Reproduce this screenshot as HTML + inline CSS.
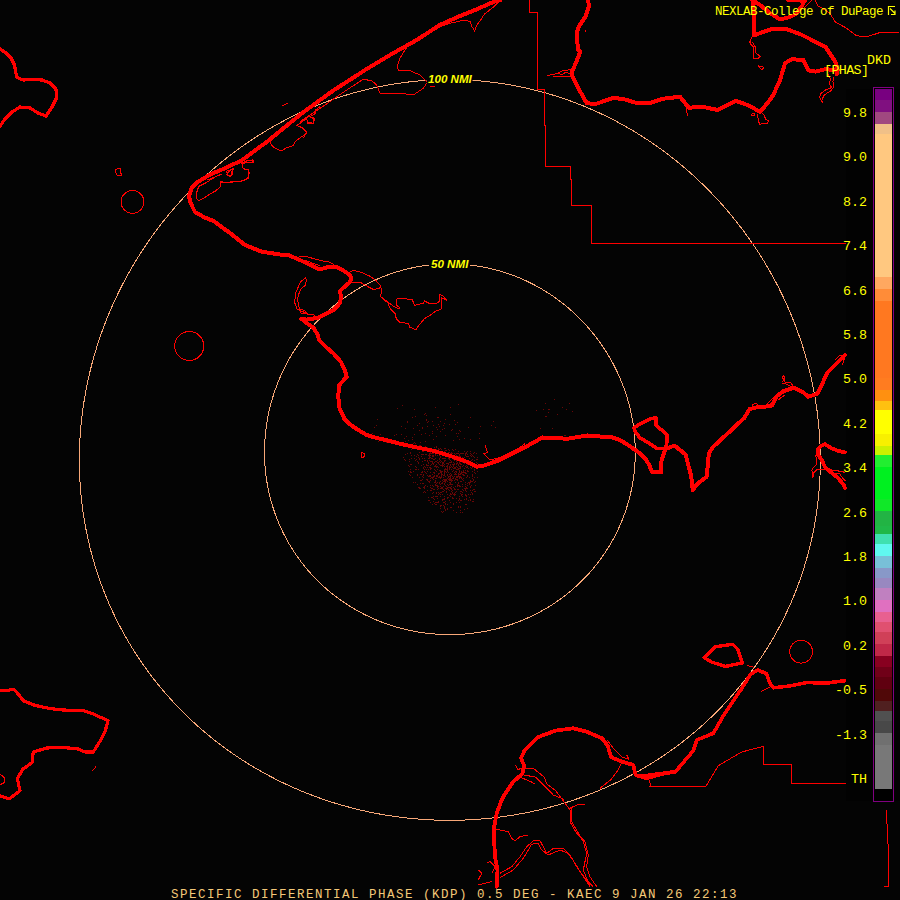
<!DOCTYPE html>
<html><head><meta charset="utf-8">
<style>
html,body{margin:0;padding:0;background:#040404;}
#wrap{position:relative;width:900px;height:900px;overflow:hidden;background:#040404;}
svg{position:absolute;left:0;top:0;}
.t{position:absolute;font-family:"Liberation Mono",monospace;white-space:pre;line-height:1;}
.lab{position:absolute;right:33px;font-family:"Liberation Mono",monospace;font-size:13.33px;line-height:1;color:#ffff00;white-space:pre;}
.nmi{position:absolute;font-family:"Liberation Sans",sans-serif;font-weight:bold;font-style:italic;font-size:11.6px;line-height:1;color:#ffff00;white-space:pre;}
</style></head><body><div id="wrap">
<svg width="900" height="900" viewBox="0 0 900 900">
<rect x="0" y="0" width="900" height="900" fill="#040404"/>
<rect x="846" y="89" width="54" height="712" fill="#020202"/>
<path d="M453 503h1v1h-1zM434 499h1v1h-1zM425 441h1v1h-1zM394 435h1v1h-1zM465 486h1v1h-1zM449 469h1v1h-1zM465 495h1v1h-1zM449 478h1v1h-1zM446 491h1v1h-1zM458 456h1v1h-1zM449 487h1v1h-1zM458 465h1v1h-1zM439 461h1v1h-1zM458 474h1v1h-1zM470 439h1v1h-1zM406 436h1v1h-1zM439 470h1v1h-1zM458 483h1v1h-1zM442 466h1v1h-1zM469 483h1v1h-1zM450 479h1v1h-1zM472 476h1v1h-1zM427 486h1v1h-1zM451 453h1v1h-1zM462 453h1v1h-1zM473 453h1v1h-1zM451 462h1v1h-1zM462 462h1v1h-1zM443 458h1v1h-1zM472 494h1v1h-1zM432 421h1v1h-1zM454 467h1v1h-1zM452 497h1v1h-1zM464 499h1v1h-1zM420 474h1v1h-1zM434 476h1v1h-1zM445 476h1v1h-1zM465 454h1v1h-1zM445 485h1v1h-1zM446 450h1v1h-1zM453 498h1v1h-1zM436 427h1v1h-1zM465 472h1v1h-1zM436 436h1v1h-1zM434 503h1v1h-1zM445 503h1v1h-1zM458 433h1v1h-1zM457 477h1v1h-1zM465 490h1v1h-1zM438 473h1v1h-1zM446 486h1v1h-1zM458 451h1v1h-1zM430 469h1v1h-1zM449 482h1v1h-1zM457 486h1v1h-1zM458 460h1v1h-1zM430 478h1v1h-1zM458 469h1v1h-1zM430 487h1v1h-1zM450 465h1v1h-1zM451 430h1v1h-1zM419 459h1v1h-1zM460 506h1v1h-1zM472 471h1v1h-1zM419 477h1v1h-1zM420 442h1v1h-1zM443 453h1v1h-1zM454 453h1v1h-1zM569 403h1v1h-1zM423 447h1v1h-1zM441 483h1v1h-1zM475 485h1v1h-1zM441 492h1v1h-1zM476 459h1v1h-1zM452 492h1v1h-1zM453 466h1v1h-1zM434 462h1v1h-1zM445 471h1v1h-1zM413 448h1v1h-1zM424 448h1v1h-1zM425 413h1v1h-1zM445 480h1v1h-1zM468 482h1v1h-1zM434 489h1v1h-1zM449 450h1v1h-1zM446 463h1v1h-1zM457 463h1v1h-1zM449 459h1v1h-1zM446 472h1v1h-1zM430 455h1v1h-1zM415 466h1v1h-1zM449 468h1v1h-1zM442 429h1v1h-1zM477 459h1v1h-1zM438 477h1v1h-1zM438 486h1v1h-1zM419 445h1v1h-1zM450 460h1v1h-1zM471 492h1v1h-1zM427 467h1v1h-1zM442 465h1v1h-1zM456 512h1v1h-1zM460 510h1v1h-1zM472 475h1v1h-1zM452 478h1v1h-1zM435 407h1v1h-1zM472 493h1v1h-1zM404 438h1v1h-1zM423 451h1v1h-1zM441 487h1v1h-1zM422 483h1v1h-1zM397 408h1v1h-1zM433 492h1v1h-1zM441 505h1v1h-1zM453 470h1v1h-1zM433 501h1v1h-1zM411 464h1v1h-1zM434 466h1v1h-1zM468 468h1v1h-1zM434 475h1v1h-1zM465 453h1v1h-1zM415 443h1v1h-1zM457 467h1v1h-1zM438 463h1v1h-1zM427 426h1v1h-1zM457 476h1v1h-1zM444 506h1v1h-1zM467 508h1v1h-1zM430 468h1v1h-1zM436 502h1v1h-1zM408 440h1v1h-1zM437 485h1v1h-1zM448 485h1v1h-1zM456 498h1v1h-1zM429 481h1v1h-1zM419 458h1v1h-1zM443 425h1v1h-1zM464 457h1v1h-1zM452 464h1v1h-1zM440 508h1v1h-1zM441 473h1v1h-1zM464 475h1v1h-1zM412 437h1v1h-1zM445 452h1v1h-1zM453 465h1v1h-1zM426 448h1v1h-1zM433 496h1v1h-1zM445 479h1v1h-1zM467 476h1v1h-1zM457 453h1v1h-1zM438 449h1v1h-1zM467 485h1v1h-1zM457 462h1v1h-1zM450 414h1v1h-1zM449 458h1v1h-1zM438 467h1v1h-1zM456 466h1v1h-1zM449 467h1v1h-1zM459 499h1v1h-1zM460 464h1v1h-1zM471 464h1v1h-1zM460 473h1v1h-1zM427 448h1v1h-1zM429 476h1v1h-1zM437 489h1v1h-1zM448 489h1v1h-1zM460 491h1v1h-1zM456 502h1v1h-1zM454 420h1v1h-1zM437 498h1v1h-1zM460 500h1v1h-1zM557 414h1v1h-1zM440 494h1v1h-1zM472 474h1v1h-1zM433 455h1v1h-1zM433 464h1v1h-1zM441 477h1v1h-1zM410 471h1v1h-1zM476 453h1v1h-1zM434 447h1v1h-1zM476 462h1v1h-1zM438 417h1v1h-1zM411 472h1v1h-1zM458 404h1v1h-1zM432 504h1v1h-1zM467 471h1v1h-1zM459 476h1v1h-1zM436 483h1v1h-1zM459 485h1v1h-1zM415 460h1v1h-1zM456 461h1v1h-1zM444 496h1v1h-1zM425 492h1v1h-1zM436 492h1v1h-1zM437 466h1v1h-1zM460 468h1v1h-1zM471 468h1v1h-1zM418 462h1v1h-1zM456 479h1v1h-1zM437 475h1v1h-1zM460 477h1v1h-1zM428 497h1v1h-1zM440 471h1v1h-1zM464 438h1v1h-1zM460 486h1v1h-1zM470 499h1v1h-1zM433 459h1v1h-1zM441 472h1v1h-1zM414 455h1v1h-1zM410 475h1v1h-1zM433 477h1v1h-1zM463 478h1v1h-1zM433 486h1v1h-1zM411 449h1v1h-1zM411 458h1v1h-1zM445 460h1v1h-1zM455 492h1v1h-1zM447 488h1v1h-1zM426 465h1v1h-1zM467 466h1v1h-1zM447 497h1v1h-1zM459 462h1v1h-1zM444 473h1v1h-1zM467 475h1v1h-1zM435 504h1v1h-1zM459 471h1v1h-1zM436 478h1v1h-1zM417 474h1v1h-1zM437 452h1v1h-1zM448 452h1v1h-1zM471 454h1v1h-1zM545 403h1v1h-1zM436 496h1v1h-1zM460 463h1v1h-1zM459 498h1v1h-1zM456 474h1v1h-1zM418 457h1v1h-1zM429 457h1v1h-1zM440 457h1v1h-1zM377 419h1v1h-1zM448 479h1v1h-1zM460 481h1v1h-1zM471 481h1v1h-1zM429 475h1v1h-1zM472 455h1v1h-1zM450 507h1v1h-1zM440 484h1v1h-1zM441 449h1v1h-1zM452 449h1v1h-1zM464 451h1v1h-1zM421 480h1v1h-1zM470 494h1v1h-1zM442 512h1v1h-1zM410 452h1v1h-1zM422 454h1v1h-1zM452 467h1v1h-1zM445 419h1v1h-1zM426 415h1v1h-1zM433 463h1v1h-1zM473 499h1v1h-1zM452 476h1v1h-1zM454 495h1v1h-1zM422 472h1v1h-1zM433 472h1v1h-1zM453 450h1v1h-1zM474 482h1v1h-1zM455 478h1v1h-1zM474 491h1v1h-1zM447 474h1v1h-1zM432 485h1v1h-1zM466 487h1v1h-1zM466 496h1v1h-1zM467 470h1v1h-1zM436 464h1v1h-1zM459 466h1v1h-1zM460 431h1v1h-1zM552 428h1v1h-1zM467 488h1v1h-1zM428 469h1v1h-1zM456 460h1v1h-1zM409 474h1v1h-1zM456 469h1v1h-1zM460 467h1v1h-1zM469 497h1v1h-1zM440 470h1v1h-1zM458 506h1v1h-1zM450 502h1v1h-1zM470 480h1v1h-1zM452 453h1v1h-1zM380 434h1v1h-1zM443 481h1v1h-1zM422 458h1v1h-1zM451 494h1v1h-1zM462 494h1v1h-1zM420 488h1v1h-1zM426 419h1v1h-1zM431 497h1v1h-1zM443 499h1v1h-1zM462 512h1v1h-1zM474 477h1v1h-1zM455 473h1v1h-1zM466 473h1v1h-1zM447 469h1v1h-1zM455 482h1v1h-1zM447 478h1v1h-1zM466 491h1v1h-1zM467 456h1v1h-1zM435 485h1v1h-1zM425 450h1v1h-1zM447 487h1v1h-1zM459 461h1v1h-1zM444 472h1v1h-1zM428 455h1v1h-1zM459 470h1v1h-1zM465 504h1v1h-1zM444 481h1v1h-1zM444 490h1v1h-1zM456 455h1v1h-1zM460 453h1v1h-1zM421 434h1v1h-1zM456 464h1v1h-1zM406 445h1v1h-1zM437 460h1v1h-1zM429 456h1v1h-1zM440 456h1v1h-1zM437 469h1v1h-1zM450 488h1v1h-1zM440 465h1v1h-1zM451 480h1v1h-1zM473 480h1v1h-1zM454 476h1v1h-1zM433 453h1v1h-1zM451 489h1v1h-1zM462 489h1v1h-1zM420 483h1v1h-1zM473 489h1v1h-1zM548 412h1v1h-1zM414 458h1v1h-1zM454 494h1v1h-1zM451 507h1v1h-1zM463 472h1v1h-1zM474 472h1v1h-1zM455 468h1v1h-1zM466 477h1v1h-1zM413 471h1v1h-1zM424 471h1v1h-1zM455 486h1v1h-1zM467 451h1v1h-1zM416 467h1v1h-1zM435 480h1v1h-1zM432 493h1v1h-1zM444 458h1v1h-1zM425 454h1v1h-1zM459 456h1v1h-1zM425 472h1v1h-1zM459 474h1v1h-1zM449 500h1v1h-1zM437 455h1v1h-1zM448 455h1v1h-1zM429 451h1v1h-1zM439 483h1v1h-1zM450 483h1v1h-1zM429 460h1v1h-1zM440 460h1v1h-1zM470 461h1v1h-1zM421 456h1v1h-1zM462 457h1v1h-1zM427 490h1v1h-1zM442 488h1v1h-1zM421 465h1v1h-1zM451 466h1v1h-1zM462 466h1v1h-1zM443 462h1v1h-1zM451 475h1v1h-1zM433 439h1v1h-1zM451 484h1v1h-1zM462 484h1v1h-1zM454 480h1v1h-1zM423 474h1v1h-1zM443 489h1v1h-1zM432 452h1v1h-1zM455 454h1v1h-1zM423 483h1v1h-1zM454 489h1v1h-1zM432 461h1v1h-1zM423 492h1v1h-1zM424 466h1v1h-1zM435 466h1v1h-1zM447 468h1v1h-1zM468 500h1v1h-1zM432 488h1v1h-1zM435 484h1v1h-1zM436 449h1v1h-1zM465 494h1v1h-1zM417 454h1v1h-1zM479 438h1v1h-1zM425 467h1v1h-1zM436 467h1v1h-1zM428 463h1v1h-1zM458 464h1v1h-1zM409 459h1v1h-1zM477 477h1v1h-1zM449 495h1v1h-1zM458 473h1v1h-1zM458 482h1v1h-1zM469 482h1v1h-1zM450 478h1v1h-1zM461 478h1v1h-1zM429 455h1v1h-1zM442 474h1v1h-1zM450 487h1v1h-1zM451 452h1v1h-1zM458 500h1v1h-1zM442 483h1v1h-1zM452 429h1v1h-1zM450 496h1v1h-1zM451 461h1v1h-1zM433 425h1v1h-1zM536 410h1v1h-1zM431 464h1v1h-1zM424 458h1v1h-1zM451 479h1v1h-1zM462 479h1v1h-1zM473 479h1v1h-1zM443 475h1v1h-1zM451 488h1v1h-1zM463 453h1v1h-1zM372 433h1v1h-1zM455 449h1v1h-1zM463 462h1v1h-1zM413 443h1v1h-1zM454 493h1v1h-1zM432 456h1v1h-1zM423 487h1v1h-1zM447 454h1v1h-1zM455 467h1v1h-1zM416 448h1v1h-1zM466 467h1v1h-1zM435 461h1v1h-1zM447 463h1v1h-1zM432 474h1v1h-1zM435 470h1v1h-1zM543 409h1v1h-1zM444 448h1v1h-1zM465 489h1v1h-1zM457 485h1v1h-1zM409 445h1v1h-1zM477 463h1v1h-1zM428 458h1v1h-1zM458 459h1v1h-1zM449 490h1v1h-1zM439 455h1v1h-1zM458 468h1v1h-1zM461 464h1v1h-1zM439 464h1v1h-1zM450 464h1v1h-1zM469 477h1v1h-1zM427 471h1v1h-1zM439 473h1v1h-1zM450 473h1v1h-1zM470 451h1v1h-1zM461 473h1v1h-1zM427 480h1v1h-1zM439 482h1v1h-1zM450 482h1v1h-1zM402 405h1v1h-1zM461 491h1v1h-1zM451 456h1v1h-1zM473 456h1v1h-1zM442 487h1v1h-1zM443 452h1v1h-1zM461 500h1v1h-1zM473 465h1v1h-1zM451 474h1v1h-1zM462 474h1v1h-1zM431 468h1v1h-1zM432 433h1v1h-1zM423 464h1v1h-1zM431 477h1v1h-1zM443 479h1v1h-1zM474 457h1v1h-1zM466 453h1v1h-1zM445 488h1v1h-1zM435 465h1v1h-1zM465 466h1v1h-1zM453 510h1v1h-1zM425 448h1v1h-1zM465 484h1v1h-1zM446 480h1v1h-1zM457 480h1v1h-1zM449 476h1v1h-1zM446 489h1v1h-1zM430 472h1v1h-1zM457 489h1v1h-1zM477 467h1v1h-1zM493 421h1v1h-1zM438 494h1v1h-1zM439 459h1v1h-1zM430 490h1v1h-1zM442 464h1v1h-1zM427 475h1v1h-1zM439 477h1v1h-1zM450 477h1v1h-1zM470 455h1v1h-1zM408 471h1v1h-1zM461 477h1v1h-1zM442 482h1v1h-1zM420 445h1v1h-1zM462 460h1v1h-1zM442 491h1v1h-1zM454 456h1v1h-1zM464 488h1v1h-1zM443 465h1v1h-1zM472 501h1v1h-1zM349 421h1v1h-1zM454 474h1v1h-1zM423 468h1v1h-1zM412 477h1v1h-1zM423 477h1v1h-1zM453 478h1v1h-1zM432 455h1v1h-1zM453 487h1v1h-1zM424 460h1v1h-1zM465 461h1v1h-1zM426 479h1v1h-1zM416 456h1v1h-1zM468 494h1v1h-1zM428 421h1v1h-1zM465 470h1v1h-1zM554 399h1v1h-1zM445 501h1v1h-1zM446 466h1v1h-1zM438 462h1v1h-1zM449 462h1v1h-1zM445 510h1v1h-1zM465 488h1v1h-1zM415 469h1v1h-1zM437 417h1v1h-1zM457 484h1v1h-1zM430 467h1v1h-1zM565 435h1v1h-1zM409 444h1v1h-1zM449 480h1v1h-1zM386 442h1v1h-1zM469 458h1v1h-1zM430 476h1v1h-1zM477 471h1v1h-1zM439 454h1v1h-1zM566 409h1v1h-1zM430 485h1v1h-1zM427 461h1v1h-1zM458 476h1v1h-1zM461 472h1v1h-1zM437 502h1v1h-1zM427 479h1v1h-1zM461 481h1v1h-1zM472 478h1v1h-1zM431 449h1v1h-1zM412 445h1v1h-1zM431 458h1v1h-1zM454 460h1v1h-1zM423 454h1v1h-1zM452 490h1v1h-1zM453 464h1v1h-1zM413 428h1v1h-1zM404 459h1v1h-1zM468 462h1v1h-1zM434 469h1v1h-1zM445 469h1v1h-1zM468 471h1v1h-1zM374 427h1v1h-1zM435 455h1v1h-1zM562 407h1v1h-1zM438 448h1v1h-1zM564 435h1v1h-1zM417 425h1v1h-1zM430 453h1v1h-1zM449 466h1v1h-1zM446 479h1v1h-1zM457 479h1v1h-1zM477 457h1v1h-1zM446 488h1v1h-1zM458 453h1v1h-1zM415 482h1v1h-1zM427 447h1v1h-1zM439 449h1v1h-1zM430 480h1v1h-1zM449 484h1v1h-1zM439 458h1v1h-1zM419 452h1v1h-1zM442 454h1v1h-1zM427 465h1v1h-1zM450 467h1v1h-1zM442 463h1v1h-1zM472 464h1v1h-1zM448 497h1v1h-1zM549 409h1v1h-1zM441 476h1v1h-1zM431 453h1v1h-1zM424 414h1v1h-1zM453 459h1v1h-1zM423 467h1v1h-1zM453 468h1v1h-1zM405 428h1v1h-1zM453 477h1v1h-1zM434 473h1v1h-1zM426 469h1v1h-1zM434 482h1v1h-1zM445 482h1v1h-1zM449 452h1v1h-1zM430 448h1v1h-1zM439 426h1v1h-1zM430 457h1v1h-1zM459 502h1v1h-1zM449 479h1v1h-1zM545 416h1v1h-1zM430 475h1v1h-1zM460 476h1v1h-1zM450 453h1v1h-1zM461 453h1v1h-1zM408 447h1v1h-1zM471 485h1v1h-1zM427 460h1v1h-1zM442 458h1v1h-1zM472 459h1v1h-1zM440 488h1v1h-1zM412 417h1v1h-1zM408 465h1v1h-1zM401 426h1v1h-1zM460 512h1v1h-1zM440 506h1v1h-1zM441 471h1v1h-1zM452 471h1v1h-1zM475 473h1v1h-1zM452 480h1v1h-1zM422 476h1v1h-1zM433 476h1v1h-1zM475 491h1v1h-1zM432 431h1v1h-1zM445 450h1v1h-1zM452 498h1v1h-1zM434 459h1v1h-1zM480 426h1v1h-1zM572 411h1v1h-1zM445 468h1v1h-1zM426 464h1v1h-1zM465 455h1v1h-1zM426 473h1v1h-1zM467 483h1v1h-1zM457 469h1v1h-1zM430 452h1v1h-1zM444 499h1v1h-1zM430 461h1v1h-1zM449 474h1v1h-1zM444 508h1v1h-1zM436 504h1v1h-1zM470 417h1v1h-1zM428 500h1v1h-1zM456 491h1v1h-1zM437 487h1v1h-1zM448 487h1v1h-1zM437 496h1v1h-1zM440 492h1v1h-1zM452 457h1v1h-1zM464 468h1v1h-1zM472 481h1v1h-1zM441 475h1v1h-1zM412 439h1v1h-1zM453 440h1v1h-1zM410 469h1v1h-1zM422 471h1v1h-1zM423 448h1v1h-1zM452 484h1v1h-1zM404 444h1v1h-1zM452 493h1v1h-1zM453 458h1v1h-1zM433 489h1v1h-1zM468 456h1v1h-1zM463 490h1v1h-1zM433 498h1v1h-1zM403 457h1v1h-1zM466 495h1v1h-1zM434 472h1v1h-1zM438 424h1v1h-1zM449 424h1v1h-1zM466 504h1v1h-1zM445 481h1v1h-1zM450 407h1v1h-1zM447 509h1v1h-1zM438 451h1v1h-1zM430 465h1v1h-1zM448 464h1v1h-1zM460 466h1v1h-1zM456 477h1v1h-1zM418 469h1v1h-1zM437 482h1v1h-1zM440 478h1v1h-1zM460 493h1v1h-1zM421 474h1v1h-1zM418 487h1v1h-1zM472 467h1v1h-1zM546 416h1v1h-1zM440 496h1v1h-1zM441 461h1v1h-1zM464 463h1v1h-1zM440 505h1v1h-1zM464 472h1v1h-1zM401 434h1v1h-1zM410 464h1v1h-1zM475 481h1v1h-1zM441 488h1v1h-1zM434 449h1v1h-1zM453 462h1v1h-1zM445 458h1v1h-1zM426 454h1v1h-1zM432 497h1v1h-1zM467 464h1v1h-1zM466 499h1v1h-1zM407 422h1v1h-1zM444 471h1v1h-1zM435 502h1v1h-1zM447 504h1v1h-1zM444 480h1v1h-1zM436 476h1v1h-1zM459 478h1v1h-1zM425 485h1v1h-1zM436 485h1v1h-1zM444 498h1v1h-1zM456 463h1v1h-1zM428 481h1v1h-1zM459 496h1v1h-1zM419 423h1v1h-1zM444 507h1v1h-1zM456 472h1v1h-1zM418 455h1v1h-1zM448 477h1v1h-1zM437 486h1v1h-1zM429 482h1v1h-1zM495 427h1v1h-1zM452 456h1v1h-1zM433 452h1v1h-1zM429 500h1v1h-1zM441 465h1v1h-1zM422 461h1v1h-1zM441 474h1v1h-1zM463 471h1v1h-1zM445 435h1v1h-1zM443 502h1v1h-1zM422 479h1v1h-1zM433 479h1v1h-1zM463 480h1v1h-1zM443 511h1v1h-1zM474 489h1v1h-1zM447 481h1v1h-1zM455 494h1v1h-1zM424 488h1v1h-1zM459 455h1v1h-1zM457 436h1v1h-1zM444 466h1v1h-1zM479 433h1v1h-1zM444 475h1v1h-1zM447 508h1v1h-1zM436 471h1v1h-1zM444 484h1v1h-1zM453 494h1v1h-1zM428 476h1v1h-1zM427 422h1v1h-1zM407 453h1v1h-1zM460 456h1v1h-1zM471 456h1v1h-1zM444 502h1v1h-1zM491 425h1v1h-1zM448 463h1v1h-1zM456 476h1v1h-1zM448 472h1v1h-1zM460 474h1v1h-1zM440 477h1v1h-1zM377 439h1v1h-1zM440 486h1v1h-1zM441 451h1v1h-1zM470 487h1v1h-1zM414 434h1v1h-1zM433 456h1v1h-1zM462 492h1v1h-1zM454 488h1v1h-1zM473 501h1v1h-1zM410 472h1v1h-1zM463 475h1v1h-1zM455 471h1v1h-1zM445 448h1v1h-1zM447 467h1v1h-1zM432 478h1v1h-1zM376 425h1v1h-1zM411 455h1v1h-1zM457 422h1v1h-1zM455 489h1v1h-1zM467 454h1v1h-1zM415 416h1v1h-1zM466 498h1v1h-1zM444 461h1v1h-1zM447 494h1v1h-1zM407 421h1v1h-1zM444 470h1v1h-1zM436 466h1v1h-1zM459 468h1v1h-1zM444 479h1v1h-1zM428 462h1v1h-1zM436 475h1v1h-1zM459 477h1v1h-1zM456 453h1v1h-1zM459 486h1v1h-1zM448 449h1v1h-1zM436 493h1v1h-1zM448 458h1v1h-1zM471 460h1v1h-1zM456 471h1v1h-1zM429 454h1v1h-1zM418 463h1v1h-1zM437 476h1v1h-1zM448 476h1v1h-1zM461 495h1v1h-1zM440 472h1v1h-1zM451 469h1v1h-1zM440 481h1v1h-1zM470 482h1v1h-1zM442 500h1v1h-1zM452 455h1v1h-1zM422 451h1v1h-1zM474 452h1v1h-1zM470 500h1v1h-1zM462 496h1v1h-1zM468 427h1v1h-1zM431 490h1v1h-1zM455 457h1v1h-1zM463 470h1v1h-1zM474 470h1v1h-1zM424 469h1v1h-1zM447 471h1v1h-1zM403 446h1v1h-1zM435 478h1v1h-1zM424 487h1v1h-1zM436 452h1v1h-1zM459 454h1v1h-1zM467 467h1v1h-1zM435 496h1v1h-1zM436 461h1v1h-1zM459 463h1v1h-1zM444 474h1v1h-1zM447 498h1v1h-1zM459 472h1v1h-1zM396 434h1v1h-1zM444 483h1v1h-1zM440 431h1v1h-1zM417 475h1v1h-1zM419 430h1v1h-1zM417 484h1v1h-1zM429 449h1v1h-1zM458 485h1v1h-1zM437 462h1v1h-1zM429 458h1v1h-1zM421 454h1v1h-1zM429 467h1v1h-1zM422 428h1v1h-1zM421 472h1v1h-1zM470 486h1v1h-1zM414 442h1v1h-1zM410 453h1v1h-1zM451 491h1v1h-1zM466 452h1v1h-1zM463 465h1v1h-1zM463 474h1v1h-1zM443 505h1v1h-1zM447 466h1v1h-1zM432 477h1v1h-1zM405 460h1v1h-1zM455 479h1v1h-1zM447 475h1v1h-1zM540 428h1v1h-1zM466 488h1v1h-1zM444 451h1v1h-1zM416 469h1v1h-1zM413 482h1v1h-1zM436 447h1v1h-1zM435 482h1v1h-1zM444 460h1v1h-1zM447 484h1v1h-1zM424 491h1v1h-1zM459 458h1v1h-1zM444 469h1v1h-1zM417 461h1v1h-1zM429 435h1v1h-1zM409 466h1v1h-1zM438 502h1v1h-1zM448 457h1v1h-1zM439 476h1v1h-1zM450 476h1v1h-1zM429 453h1v1h-1zM458 489h1v1h-1zM440 462h1v1h-1zM450 494h1v1h-1zM461 494h1v1h-1zM458 507h1v1h-1zM419 488h1v1h-1zM470 481h1v1h-1zM454 464h1v1h-1zM442 499h1v1h-1zM470 490h1v1h-1zM451 486h1v1h-1zM462 486h1v1h-1zM420 480h1v1h-1zM463 460h1v1h-1zM474 460h1v1h-1zM443 491h1v1h-1zM455 456h1v1h-1zM466 456h1v1h-1zM474 469h1v1h-1zM426 420h1v1h-1zM548 409h1v1h-1zM432 463h1v1h-1zM466 465h1v1h-1zM444 428h1v1h-1zM455 474h1v1h-1zM447 470h1v1h-1zM453 504h1v1h-1zM425 433h1v1h-1zM445 509h1v1h-1zM364 435h1v1h-1zM424 486h1v1h-1zM444 464h1v1h-1zM425 460h1v1h-1zM446 492h1v1h-1zM440 421h1v1h-1zM438 488h1v1h-1zM428 465h1v1h-1zM409 461h1v1h-1zM450 462h1v1h-1zM458 475h1v1h-1zM461 471h1v1h-1zM440 448h1v1h-1zM469 484h1v1h-1zM430 502h1v1h-1zM450 480h1v1h-1zM470 467h1v1h-1zM422 427h1v1h-1zM442 494h1v1h-1zM455 424h1v1h-1zM462 472h1v1h-1zM454 468h1v1h-1zM451 481h1v1h-1zM443 477h1v1h-1zM464 509h1v1h-1zM443 486h1v1h-1zM432 449h1v1h-1zM432 458h1v1h-1zM405 441h1v1h-1zM444 423h1v1h-1zM435 454h1v1h-1zM447 456h1v1h-1zM447 465h1v1h-1zM459 430h1v1h-1zM416 459h1v1h-1zM465 473h1v1h-1zM459 439h1v1h-1zM445 504h1v1h-1zM446 469h1v1h-1zM435 481h1v1h-1zM425 446h1v1h-1zM436 446h1v1h-1zM465 482h1v1h-1zM438 474h1v1h-1zM456 433h1v1h-1zM437 429h1v1h-1zM378 441h1v1h-1zM438 492h1v1h-1zM438 501h1v1h-1zM442 462h1v1h-1zM450 475h1v1h-1zM470 453h1v1h-1zM442 471h1v1h-1zM450 484h1v1h-1zM460 507h1v1h-1zM442 480h1v1h-1zM414 409h1v1h-1zM439 493h1v1h-1zM450 493h1v1h-1zM390 442h1v1h-1zM419 487h1v1h-1zM472 490h1v1h-1zM431 461h1v1h-1zM443 463h1v1h-1zM454 463h1v1h-1zM454 472h1v1h-1zM423 475h1v1h-1zM441 511h1v1h-1zM431 488h1v1h-1zM432 453h1v1h-1zM435 449h1v1h-1zM432 462h1v1h-1zM435 458h1v1h-1zM405 454h1v1h-1z" fill="#6a0606"/>
<polygon points="820.21,450.00 820.28,453.24 820.33,456.47 820.35,459.71 820.34,462.95 820.30,466.19 820.23,469.43 820.13,472.67 820.00,475.91 819.85,479.15 819.67,482.39 819.45,485.62 819.21,488.86 818.94,492.09 818.64,495.33 818.32,498.56 817.96,501.78 817.57,505.01 817.16,508.23 816.71,511.45 816.24,514.67 815.74,517.88 815.20,521.09 814.64,524.29 814.05,527.49 813.43,530.68 812.79,533.87 812.11,537.05 811.40,540.23 810.67,543.40 809.90,546.57 809.11,549.73 808.28,552.88 807.43,556.02 806.55,559.16 805.64,562.29 804.70,565.41 803.74,568.53 802.74,571.63 801.72,574.73 800.66,577.81 799.58,580.89 798.47,583.96 797.33,587.01 796.16,590.06 794.97,593.10 793.74,596.12 792.49,599.14 791.21,602.14 789.90,605.13 788.57,608.11 787.21,611.08 785.82,614.03 784.40,616.97 782.95,619.90 781.48,622.82 779.98,625.72 778.45,628.61 776.90,631.48 775.32,634.34 773.71,637.18 772.08,640.01 770.42,642.83 768.73,645.62 767.02,648.41 765.28,651.17 763.52,653.93 761.73,656.66 759.91,659.38 758.07,662.08 756.21,664.76 754.32,667.43 752.41,670.08 750.47,672.71 748.51,675.32 746.52,677.91 744.51,680.49 742.48,683.04 740.42,685.58 738.34,688.10 736.23,690.60 734.11,693.08 731.96,695.54 729.79,697.98 727.59,700.40 725.38,702.80 723.14,705.17 720.88,707.53 718.60,709.87 716.30,712.18 713.98,714.48 711.63,716.75 709.27,719.00 706.89,721.23 704.48,723.44 702.06,725.62 699.62,727.78 697.15,729.92 694.67,732.04 692.17,734.13 689.66,736.21 687.12,738.25 684.56,740.28 681.99,742.28 679.40,744.26 676.79,746.22 674.17,748.15 671.53,750.05 668.87,751.94 666.20,753.80 663.51,755.63 660.80,757.44 658.08,759.23 655.34,760.99 652.59,762.73 649.82,764.44 647.04,766.13 644.24,767.79 641.43,769.43 638.61,771.05 635.77,772.63 632.92,774.20 630.06,775.73 627.18,777.25 624.29,778.73 621.39,780.20 618.48,781.63 615.55,783.04 612.61,784.43 609.66,785.79 606.70,787.12 603.73,788.43 600.75,789.71 597.76,790.97 594.75,792.20 591.74,793.40 588.72,794.58 585.69,795.73 582.65,796.86 579.60,797.96 576.54,799.03 573.47,800.08 570.39,801.10 567.31,802.10 564.22,803.06 561.12,804.01 558.01,804.92 554.90,805.81 551.78,806.68 548.65,807.51 545.51,808.33 542.37,809.11 539.22,809.87 536.07,810.60 532.91,811.30 529.75,811.98 526.58,812.63 523.41,813.26 520.23,813.86 517.04,814.43 513.86,814.98 510.66,815.50 507.47,815.99 504.27,816.46 501.06,816.90 497.86,817.31 494.65,817.69 491.43,818.05 488.22,818.39 485.00,818.69 481.78,818.97 478.56,819.23 475.33,819.45 472.11,819.65 468.88,819.83 465.65,819.98 462.42,820.10 459.19,820.19 455.96,820.26 452.73,820.30 449.50,820.31 446.27,820.30 443.04,820.26 439.81,820.19 436.58,820.10 433.35,819.98 430.12,819.83 426.89,819.66 423.66,819.46 420.44,819.23 417.22,818.98 414.00,818.70 410.78,818.40 407.56,818.06 404.35,817.70 401.14,817.32 397.94,816.90 394.73,816.46 391.53,816.00 388.34,815.51 385.14,814.99 381.95,814.44 378.77,813.87 375.59,813.27 372.42,812.64 369.25,811.99 366.08,811.31 362.93,810.61 359.77,809.88 356.63,809.12 353.49,808.33 350.35,807.52 347.22,806.68 344.10,805.82 340.99,804.93 337.88,804.01 334.78,803.07 331.69,802.10 328.61,801.10 325.53,800.08 322.46,799.03 319.41,797.95 316.36,796.85 313.32,795.72 310.29,794.57 307.26,793.39 304.25,792.18 301.25,790.95 298.26,789.69 295.28,788.41 292.31,787.10 289.35,785.76 286.40,784.40 283.47,783.01 280.54,781.60 277.63,780.16 274.73,778.69 271.84,777.20 268.97,775.69 266.11,774.15 263.26,772.58 260.42,770.99 257.60,769.37 254.79,767.73 252.00,766.07 249.22,764.37 246.46,762.66 243.71,760.92 240.98,759.15 238.26,757.36 235.55,755.55 232.87,753.71 230.20,751.84 227.54,749.96 224.91,748.05 222.29,746.11 219.68,744.15 217.10,742.17 214.53,740.16 211.98,738.14 209.45,736.08 206.93,734.01 204.44,731.91 201.96,729.79 199.51,727.64 197.07,725.48 194.65,723.29 192.25,721.08 189.88,718.85 187.52,716.59 185.18,714.32 182.87,712.02 180.57,709.70 178.30,707.36 176.05,705.00 173.81,702.62 171.61,700.22 169.42,697.79 167.25,695.35 165.11,692.89 162.99,690.41 160.90,687.91 158.82,685.38 156.77,682.84 154.75,680.29 152.75,677.71 150.77,675.11 148.81,672.50 146.88,669.86 144.98,667.21 143.10,664.55 141.24,661.86 139.41,659.16 137.60,656.44 135.82,653.70 134.07,650.95 132.34,648.18 130.63,645.40 128.96,642.60 127.31,639.79 125.68,636.96 124.08,634.11 122.51,631.25 120.96,628.38 119.45,625.49 117.95,622.59 116.49,619.68 115.05,616.75 113.64,613.81 112.26,610.86 110.90,607.89 109.58,604.91 108.28,601.92 107.01,598.92 105.76,595.91 104.55,592.88 103.36,589.85 102.20,586.81 101.07,583.75 99.97,580.69 98.89,577.61 97.84,574.53 96.83,571.43 95.84,568.33 94.88,565.22 93.95,562.11 93.04,558.98 92.17,555.85 91.32,552.71 90.51,549.56 89.72,546.40 88.96,543.24 88.23,540.07 87.53,536.90 86.86,533.72 86.22,530.54 85.60,527.35 85.02,524.15 84.46,520.96 83.93,517.75 83.44,514.55 82.97,511.34 82.53,508.12 82.11,504.91 81.73,501.69 81.38,498.46 81.05,495.24 80.76,492.01 80.49,488.78 80.25,485.55 80.04,482.32 79.86,479.09 79.71,475.86 79.58,472.63 79.49,469.39 79.42,466.16 79.38,462.92 79.37,459.69 79.39,456.46 79.44,453.23 79.51,450.00 79.61,446.77 79.74,443.55 79.90,440.32 80.09,437.10 80.30,433.88 80.54,430.66 80.81,427.45 81.11,424.24 81.43,421.03 81.79,417.83 82.16,414.63 82.57,411.43 83.00,408.24 83.47,405.06 83.95,401.87 84.47,398.70 85.01,395.53 85.58,392.36 86.17,389.20 86.79,386.04 87.44,382.90 88.11,379.75 88.81,376.62 89.54,373.49 90.29,370.37 91.07,367.25 91.87,364.14 92.70,361.04 93.56,357.95 94.44,354.86 95.35,351.78 96.28,348.72 97.24,345.65 98.22,342.60 99.22,339.56 100.26,336.52 101.31,333.50 102.39,330.48 103.50,327.48 104.63,324.48 105.79,321.49 106.97,318.51 108.17,315.55 109.40,312.59 110.65,309.64 111.93,306.71 113.23,303.78 114.55,300.87 115.90,297.97 117.27,295.08 118.66,292.20 120.08,289.33 121.52,286.47 122.98,283.63 124.47,280.80 125.98,277.98 127.51,275.17 129.07,272.38 130.64,269.60 132.24,266.83 133.87,264.08 135.51,261.34 137.18,258.61 138.87,255.90 140.58,253.20 142.31,250.51 144.07,247.84 145.85,245.18 147.64,242.54 149.46,239.91 151.31,237.30 153.17,234.70 155.05,232.12 156.96,229.55 158.88,227.00 160.83,224.47 162.80,221.95 164.79,219.44 166.80,216.96 168.83,214.49 170.88,212.03 172.95,209.60 175.04,207.17 177.15,204.77 179.28,202.39 181.43,200.02 183.60,197.67 185.79,195.33 187.99,193.02 190.22,190.72 192.47,188.44 194.74,186.19 197.02,183.94 199.33,181.72 201.65,179.52 203.99,177.34 206.35,175.17 208.73,173.03 211.13,170.90 213.54,168.80 215.98,166.71 218.43,164.65 220.89,162.60 223.38,160.58 225.88,158.58 228.41,156.60 230.94,154.64 233.50,152.70 236.07,150.78 238.66,148.89 241.26,147.01 243.88,145.16 246.52,143.33 249.17,141.53 251.84,139.74 254.53,137.98 257.23,136.24 259.95,134.53 262.68,132.84 265.42,131.17 268.18,129.52 270.96,127.90 273.75,126.31 276.55,124.73 279.37,123.19 282.20,121.66 285.05,120.16 287.91,118.69 290.78,117.24 293.67,115.82 296.57,114.42 299.48,113.05 302.40,111.70 305.34,110.38 308.29,109.08 311.25,107.81 314.22,106.57 317.20,105.35 320.20,104.16 323.20,103.00 326.22,101.86 329.25,100.75 332.28,99.67 335.33,98.62 338.39,97.59 341.45,96.59 344.53,95.62 347.61,94.67 350.70,93.75 353.81,92.86 356.92,92.00 360.03,91.17 363.16,90.36 366.29,89.59 369.43,88.84 372.58,88.12 375.73,87.43 378.89,86.77 382.06,86.13 385.23,85.53 388.41,84.95 391.60,84.41 394.78,83.89 397.98,83.40 401.18,82.94 404.38,82.52 407.58,82.12 410.79,81.75 414.01,81.40 417.22,81.09 420.44,80.81 423.67,80.56 426.89,80.34 430.12,80.14 433.34,79.98 436.57,79.85 439.80,79.74 443.04,79.67 446.27,79.62 449.50,79.61 452.73,79.63 455.96,79.67 459.20,79.74 462.43,79.85 465.66,79.98 468.88,80.15 472.11,80.34 475.33,80.56 478.56,80.82 481.77,81.10 484.99,81.41 488.20,81.75 491.41,82.12 494.62,82.52 497.82,82.95 501.02,83.41 504.21,83.90 507.40,84.42 510.59,84.96 513.76,85.54 516.94,86.14 520.10,86.78 523.26,87.44 526.42,88.13 529.57,88.85 532.71,89.60 535.84,90.37 538.96,91.18 542.08,92.01 545.19,92.87 548.29,93.76 551.39,94.68 554.47,95.62 557.55,96.59 560.61,97.59 563.67,98.62 566.72,99.67 569.76,100.75 572.78,101.86 575.80,103.00 578.80,104.16 581.80,105.35 584.78,106.56 587.76,107.80 590.72,109.07 593.67,110.36 596.60,111.68 599.53,113.03 602.44,114.40 605.34,115.79 608.23,117.22 611.10,118.66 613.97,120.13 616.81,121.63 619.65,123.15 622.47,124.69 625.27,126.26 628.07,127.86 630.84,129.48 633.61,131.12 636.36,132.78 639.09,134.47 641.81,136.18 644.51,137.92 647.20,139.67 649.87,141.45 652.53,143.26 655.17,145.08 657.79,146.93 660.40,148.80 662.99,150.69 665.57,152.61 668.13,154.54 670.67,156.50 673.20,158.47 675.70,160.47 678.19,162.49 680.67,164.53 683.12,166.59 685.56,168.67 687.98,170.77 690.38,172.90 692.77,175.04 695.13,177.20 697.48,179.38 699.81,181.58 702.12,183.79 704.41,186.03 706.68,188.29 708.94,190.56 711.17,192.86 713.39,195.17 715.58,197.50 717.76,199.84 719.92,202.21 722.05,204.59 724.17,206.99 726.27,209.41 728.35,211.84 730.40,214.29 732.44,216.76 734.46,219.25 736.45,221.75 738.43,224.26 740.38,226.80 742.32,229.35 744.23,231.91 746.12,234.49 747.99,237.09 749.84,239.70 751.67,242.32 753.48,244.97 755.26,247.62 757.03,250.29 758.77,252.98 760.49,255.67 762.18,258.39 763.86,261.11 765.51,263.85 767.15,266.61 768.75,269.37 770.34,272.16 771.90,274.95 773.44,277.76 774.96,280.57 776.46,283.41 777.93,286.25 779.38,289.11 780.80,291.98 782.21,294.86 783.59,297.75 784.94,300.65 786.27,303.57 787.58,306.49 788.86,309.43 790.12,312.38 791.36,315.34 792.57,318.31 793.76,321.29 794.92,324.28 796.06,327.28 797.17,330.29 798.26,333.31 799.33,336.33 800.36,339.37 801.38,342.42 802.37,345.48 803.33,348.54 804.27,351.61 805.18,354.70 806.07,357.79 806.93,360.88 807.77,363.99 808.58,367.10 809.36,370.22 810.12,373.35 810.85,376.48 811.55,379.62 812.23,382.77 812.88,385.93 813.51,389.09 814.11,392.25 814.68,395.42 815.22,398.60 815.74,401.78 816.23,404.97 816.70,408.16 817.13,411.36 817.54,414.56 817.92,417.77 818.28,420.98 818.60,424.19 818.90,427.41 819.17,430.63 819.42,433.85 819.63,437.07 819.82,440.30 819.98,443.53 820.11,446.77" fill="none" stroke="#f8a878" stroke-width="1" shape-rendering="crispEdges"/>
<polygon points="635.24,450.00 635.25,451.62 635.25,453.24 635.23,454.86 635.20,456.48 635.16,458.11 635.10,459.73 635.03,461.35 634.94,462.97 634.84,464.59 634.72,466.20 634.59,467.82 634.45,469.44 634.29,471.05 634.12,472.67 633.93,474.28 633.73,475.89 633.51,477.50 633.28,479.11 633.04,480.71 632.78,482.32 632.50,483.92 632.22,485.52 631.91,487.11 631.60,488.71 631.27,490.30 630.92,491.88 630.56,493.47 630.19,495.05 629.80,496.63 629.40,498.20 628.99,499.78 628.56,501.34 628.11,502.91 627.65,504.47 627.18,506.02 626.69,507.57 626.19,509.12 625.68,510.66 625.15,512.20 624.61,513.74 624.06,515.26 623.49,516.79 622.90,518.31 622.31,519.82 621.69,521.33 621.07,522.83 620.43,524.32 619.78,525.81 619.12,527.30 618.44,528.78 617.75,530.25 617.04,531.72 616.32,533.18 615.59,534.63 614.85,536.07 614.09,537.51 613.32,538.95 612.54,540.37 611.74,541.79 610.93,543.20 610.11,544.61 609.27,546.00 608.43,547.39 607.57,548.77 606.70,550.14 605.81,551.51 604.91,552.87 604.01,554.22 603.08,555.56 602.15,556.89 601.21,558.21 600.25,559.53 599.28,560.83 598.30,562.13 597.31,563.42 596.30,564.70 595.29,565.97 594.26,567.23 593.22,568.48 592.18,569.72 591.12,570.95 590.04,572.17 588.96,573.39 587.87,574.59 586.77,575.78 585.65,576.97 584.53,578.14 583.39,579.30 582.25,580.45 581.09,581.59 579.93,582.73 578.75,583.85 577.57,584.96 576.37,586.06 575.17,587.14 573.96,588.22 572.73,589.29 571.50,590.34 570.26,591.39 569.01,592.42 567.75,593.44 566.48,594.45 565.20,595.45 563.91,596.44 562.62,597.42 561.31,598.38 560.00,599.34 558.68,600.28 557.36,601.21 556.02,602.13 554.68,603.03 553.32,603.92 551.96,604.81 550.60,605.68 549.22,606.53 547.84,607.38 546.45,608.21 545.06,609.03 543.65,609.84 542.25,610.64 540.83,611.42 539.41,612.19 537.98,612.95 536.54,613.70 535.10,614.43 533.65,615.15 532.20,615.86 530.74,616.56 529.27,617.24 527.80,617.91 526.32,618.57 524.84,619.21 523.35,619.85 521.86,620.47 520.36,621.07 518.86,621.66 517.35,622.24 515.84,622.81 514.32,623.36 512.80,623.91 511.27,624.43 509.74,624.95 508.20,625.45 506.67,625.94 505.12,626.41 503.58,626.87 502.03,627.32 500.47,627.76 498.91,628.18 497.35,628.59 495.79,628.98 494.22,629.37 492.65,629.74 491.08,630.09 489.50,630.43 487.92,630.76 486.34,631.08 484.76,631.38 483.17,631.67 481.58,631.94 479.99,632.20 478.40,632.45 476.80,632.69 475.21,632.91 473.61,633.12 472.01,633.31 470.41,633.49 468.80,633.66 467.20,633.81 465.59,633.95 463.99,634.08 462.38,634.19 460.77,634.29 459.16,634.38 457.55,634.45 455.94,634.51 454.33,634.55 452.72,634.59 451.11,634.61 449.50,634.61 447.89,634.60 446.28,634.58 444.67,634.54 443.06,634.49 441.45,634.43 439.84,634.35 438.23,634.26 436.62,634.16 435.02,634.04 433.41,633.91 431.80,633.77 430.20,633.61 428.60,633.44 427.00,633.26 425.40,633.06 423.80,632.85 422.21,632.62 420.61,632.38 419.02,632.13 417.43,631.87 415.84,631.59 414.26,631.29 412.68,630.99 411.10,630.67 409.52,630.34 407.95,629.99 406.37,629.63 404.81,629.26 403.24,628.87 401.68,628.47 400.12,628.06 398.56,627.64 397.01,627.20 395.46,626.74 393.92,626.28 392.38,625.80 390.84,625.31 389.31,624.80 387.78,624.28 386.26,623.75 384.74,623.21 383.23,622.65 381.72,622.08 380.21,621.50 378.71,620.90 377.22,620.29 375.73,619.67 374.24,619.03 372.76,618.38 371.29,617.72 369.82,617.05 368.36,616.36 366.90,615.66 365.45,614.95 364.01,614.23 362.57,613.49 361.14,612.74 359.72,611.98 358.30,611.20 356.89,610.41 355.48,609.61 354.08,608.80 352.69,607.98 351.31,607.14 349.93,606.29 348.56,605.43 347.20,604.56 345.85,603.67 344.50,602.78 343.16,601.87 341.83,600.95 340.51,600.02 339.19,599.07 337.89,598.12 336.59,597.15 335.30,596.17 334.02,595.18 332.75,594.18 331.48,593.16 330.23,592.14 328.99,591.10 327.75,590.06 326.52,589.00 325.31,587.93 324.10,586.85 322.90,585.76 321.71,584.66 320.53,583.55 319.36,582.43 318.21,581.29 317.06,580.15 315.92,579.00 314.79,577.83 313.67,576.66 312.57,575.48 311.47,574.28 310.38,573.08 309.31,571.87 308.25,570.64 307.19,569.41 306.15,568.17 305.12,566.92 304.10,565.66 303.09,564.39 302.10,563.11 301.11,561.82 300.14,560.52 299.18,559.22 298.23,557.90 297.29,556.58 296.36,555.25 295.45,553.91 294.55,552.56 293.66,551.21 292.78,549.84 291.91,548.47 291.06,547.09 290.22,545.70 289.39,544.31 288.58,542.91 287.78,541.50 286.99,540.08 286.21,538.66 285.45,537.23 284.70,535.79 283.96,534.35 283.23,532.90 282.52,531.44 281.82,529.98 281.14,528.51 280.47,527.03 279.81,525.55 279.16,524.06 278.53,522.57 277.91,521.07 277.31,519.57 276.72,518.06 276.14,516.55 275.58,515.03 275.03,513.50 274.49,511.97 273.97,510.44 273.46,508.90 272.96,507.36 272.48,505.81 272.02,504.26 271.56,502.71 271.12,501.15 270.70,499.59 270.29,498.02 269.89,496.45 269.51,494.88 269.14,493.30 268.78,491.72 268.44,490.14 268.12,488.55 267.80,486.97 267.51,485.38 267.22,483.78 266.95,482.19 266.69,480.59 266.45,478.99 266.22,477.39 266.01,475.79 265.81,474.18 265.63,472.58 265.46,470.97 265.30,469.36 265.16,467.75 265.03,466.14 264.91,464.53 264.81,462.91 264.73,461.30 264.66,459.69 264.60,458.07 264.55,456.46 264.52,454.84 264.51,453.23 264.51,451.61 264.52,450.00 264.55,448.39 264.59,446.77 264.64,445.16 264.71,443.55 264.79,441.94 264.89,440.32 265.00,438.72 265.12,437.11 265.26,435.50 265.41,433.89 265.58,432.29 265.76,430.69 265.95,429.09 266.16,427.49 266.38,425.89 266.62,424.30 266.86,422.70 267.13,421.11 267.40,419.53 267.69,417.94 267.99,416.36 268.31,414.78 268.64,413.20 268.98,411.63 269.33,410.06 269.70,408.49 270.09,406.93 270.48,405.37 270.89,403.81 271.31,402.25 271.75,400.70 272.20,399.16 272.66,397.62 273.13,396.08 273.62,394.54 274.12,393.02 274.63,391.49 275.16,389.97 275.70,388.45 276.25,386.94 276.81,385.43 277.39,383.93 277.98,382.44 278.58,380.94 279.19,379.46 279.82,377.98 280.46,376.50 281.11,375.03 281.78,373.56 282.45,372.10 283.14,370.65 283.84,369.20 284.55,367.76 285.28,366.32 286.02,364.90 286.76,363.47 287.52,362.05 288.30,360.64 289.08,359.24 289.88,357.84 290.69,356.45 291.51,355.07 292.34,353.69 293.18,352.32 294.03,350.96 294.90,349.60 295.78,348.25 296.66,346.91 297.56,345.58 298.48,344.25 299.40,342.93 300.33,341.62 301.27,340.32 302.23,339.02 303.20,337.74 304.17,336.46 305.16,335.19 306.16,333.92 307.17,332.67 308.19,331.42 309.22,330.19 310.26,328.96 311.31,327.74 312.37,326.53 313.44,325.33 314.53,324.13 315.62,322.95 316.72,321.78 317.83,320.61 318.96,319.46 320.09,318.31 321.23,317.17 322.38,316.05 323.54,314.93 324.71,313.82 325.90,312.72 327.09,311.64 328.29,310.56 329.49,309.49 330.71,308.43 331.94,307.39 333.18,306.35 334.42,305.33 335.68,304.31 336.94,303.31 338.21,302.31 339.49,301.33 340.78,300.36 342.08,299.40 343.38,298.45 344.70,297.51 346.02,296.58 347.35,295.67 348.69,294.76 350.04,293.87 351.39,292.99 352.75,292.12 354.12,291.26 355.50,290.42 356.88,289.59 358.28,288.76 359.68,287.96 361.08,287.16 362.50,286.37 363.92,285.60 365.35,284.84 366.78,284.09 368.22,283.36 369.67,282.64 371.13,281.93 372.59,281.23 374.05,280.55 375.53,279.87 377.01,279.22 378.49,278.57 379.98,277.94 381.48,277.32 382.98,276.71 384.49,276.12 386.00,275.54 387.52,274.98 389.04,274.43 390.57,273.89 392.11,273.36 393.65,272.85 395.19,272.35 396.74,271.87 398.29,271.40 399.84,270.94 401.40,270.50 402.97,270.07 404.54,269.66 406.11,269.26 407.68,268.87 409.26,268.50 410.85,268.14 412.43,267.80 414.02,267.47 415.61,267.16 417.21,266.85 418.80,266.57 420.40,266.30 422.01,266.04 423.61,265.80 425.22,265.57 426.83,265.35 428.44,265.15 430.05,264.97 431.67,264.80 433.28,264.64 434.90,264.50 436.52,264.38 438.14,264.26 439.76,264.17 441.38,264.08 443.01,264.02 444.63,263.96 446.25,263.92 447.88,263.90 449.50,263.89 451.12,263.90 452.75,263.92 454.37,263.95 456.00,264.00 457.62,264.06 459.24,264.14 460.86,264.24 462.48,264.34 464.10,264.47 465.72,264.60 467.34,264.76 468.95,264.92 470.57,265.10 472.18,265.30 473.79,265.51 475.40,265.73 477.00,265.97 478.61,266.23 480.21,266.50 481.81,266.78 483.40,267.07 485.00,267.39 486.59,267.71 488.17,268.05 489.76,268.40 491.34,268.77 492.92,269.16 494.49,269.55 496.06,269.96 497.63,270.39 499.19,270.82 500.75,271.28 502.30,271.74 503.85,272.22 505.40,272.72 506.94,273.22 508.47,273.74 510.01,274.28 511.53,274.83 513.05,275.39 514.57,275.96 516.08,276.55 517.59,277.16 519.09,277.77 520.58,278.40 522.07,279.04 523.55,279.69 525.03,280.36 526.50,281.04 527.96,281.74 529.42,282.44 530.87,283.16 532.32,283.89 533.76,284.64 535.19,285.39 536.61,286.16 538.03,286.94 539.44,287.74 540.85,288.54 542.25,289.36 543.63,290.19 545.02,291.03 546.39,291.89 547.76,292.75 549.12,293.63 550.47,294.52 551.81,295.42 553.15,296.33 554.48,297.26 555.80,298.19 557.11,299.14 558.41,300.10 559.71,301.07 560.99,302.05 562.27,303.04 563.54,304.04 564.80,305.05 566.05,306.07 567.29,307.11 568.52,308.15 569.75,309.21 570.96,310.27 572.17,311.35 573.37,312.43 574.55,313.53 575.73,314.63 576.90,315.75 578.06,316.88 579.21,318.01 580.34,319.16 581.47,320.31 582.59,321.47 583.70,322.65 584.80,323.83 585.89,325.02 586.97,326.22 588.04,327.43 589.10,328.65 590.14,329.88 591.18,331.12 592.21,332.36 593.22,333.61 594.23,334.88 595.22,336.15 596.21,337.43 597.18,338.71 598.14,340.01 599.09,341.31 600.04,342.62 600.96,343.94 601.88,345.27 602.79,346.61 603.68,347.95 604.57,349.30 605.44,350.65 606.30,352.02 607.15,353.39 607.99,354.77 608.82,356.16 609.63,357.55 610.44,358.95 611.23,360.35 612.01,361.77 612.77,363.19 613.53,364.61 614.27,366.04 615.00,367.48 615.72,368.93 616.43,370.38 617.13,371.84 617.81,373.30 618.48,374.77 619.14,376.24 619.78,377.72 620.41,379.20 621.03,380.70 621.64,382.19 622.24,383.69 622.82,385.20 623.39,386.71 623.95,388.23 624.49,389.75 625.02,391.27 625.54,392.80 626.05,394.34 626.54,395.87 627.02,397.42 627.48,398.96 627.94,400.52 628.38,402.07 628.80,403.63 629.22,405.19 629.62,406.76 630.00,408.33 630.38,409.90 630.74,411.48 631.08,413.06 631.41,414.64 631.73,416.23 632.04,417.81 632.33,419.40 632.61,421.00 632.87,422.59 633.12,424.19 633.36,425.79 633.58,427.40 633.79,429.00 633.99,430.61 634.17,432.22 634.34,433.83 634.49,435.44 634.63,437.05 634.76,438.67 634.87,440.29 634.96,441.90 635.05,443.52 635.12,445.14 635.17,446.76 635.21,448.38" fill="none" stroke="#f8a878" stroke-width="1" shape-rendering="crispEdges"/>
<rect x="426.5" y="72" width="46" height="14" fill="#040404"/>
<rect x="429" y="256" width="41" height="14" fill="#040404"/>
<polyline points="815.00,0.00 818.00,6.00 822.00,8.00 830.00,13.30 835.00,21.70 846.70,28.30 856.70,35.80 866.70,36.70 875.00,34.20 880.00,32.50 900.00,32.00" fill="none" stroke="#ff0000" stroke-width="1" stroke-linejoin="round" shape-rendering="crispEdges"/>
<polyline points="804.00,8.00 812.00,0.00" fill="none" stroke="#ff0000" stroke-width="1" stroke-linejoin="round" shape-rendering="crispEdges"/>
<polyline points="440.00,26.70 450.70,23.10 463.10,20.40 470.20,21.30 472.00,26.70 474.70,31.10 476.40,25.80 480.90,19.60 484.40,14.20 493.30,7.10 500.40,0.00" fill="none" stroke="#ff0000" stroke-width="1" stroke-linejoin="round" shape-rendering="crispEdges"/>
<polyline points="300.00,121.70 310.00,115.00 315.00,111.70 325.00,105.00 341.70,93.30 363.30,79.20 371.70,80.80 376.70,85.00 380.00,93.30 400.00,93.30 413.30,95.00 423.30,88.30 426.70,83.30" fill="none" stroke="#ff0000" stroke-width="1" stroke-linejoin="round" shape-rendering="crispEdges"/>
<polyline points="426.70,81.70 420.00,75.00 408.30,70.00 398.30,70.80 397.50,65.00 400.00,58.30 405.00,50.00 410.00,43.30 416.70,40.00" fill="none" stroke="#ff0000" stroke-width="1" stroke-linejoin="round" shape-rendering="crispEdges"/>
<polyline points="300.00,123.30 308.30,116.70 315.00,118.30 313.30,123.30 306.70,123.30" fill="none" stroke="#ff0000" stroke-width="1" stroke-linejoin="round" shape-rendering="crispEdges"/>
<polyline points="300.00,126.70 306.70,131.70 303.30,138.30" fill="none" stroke="#ff0000" stroke-width="1" stroke-linejoin="round" shape-rendering="crispEdges"/>
<polyline points="430.00,86.70 435.00,86.70" fill="none" stroke="#ff0000" stroke-width="1" stroke-linejoin="round" shape-rendering="crispEdges"/>
<polyline points="270.00,141.10 271.10,144.40 274.40,147.80 281.10,151.10 286.70,147.80 293.30,145.60 295.60,141.10 300.00,137.80 305.60,134.40 306.70,132.20 302.20,127.80 296.70,125.60 301.10,122.20 306.70,118.90 307.80,122.20 313.30,123.30 313.30,118.90 310.00,116.70 315.60,113.30 315.60,110.00 320.00,106.70" fill="none" stroke="#ff0000" stroke-width="1" stroke-linejoin="round" shape-rendering="crispEdges"/>
<polyline points="241.10,163.30 245.60,161.10 252.20,160.00 253.30,162.20 246.70,162.20 242.20,164.40 243.30,168.90 248.90,170.00 248.90,177.80 242.20,181.10 231.10,182.20 224.40,182.80 220.00,182.20" fill="none" stroke="#ff0000" stroke-width="1" stroke-linejoin="round" shape-rendering="crispEdges"/>
<polyline points="226.70,171.10 230.00,170.00 232.20,172.20 230.00,176.70 226.70,174.40 233.30,167.80" fill="none" stroke="#ff0000" stroke-width="1" stroke-linejoin="round" shape-rendering="crispEdges"/>
<polyline points="241.30,163.30 247.60,160.70 252.90,159.80 253.80,162.40 247.60,162.40 242.20,163.30 243.10,168.70 248.40,169.60 249.30,173.10 247.60,178.40 241.30,181.10 229.80,182.00 224.40,182.90 220.90,181.10 220.00,187.30 215.60,190.90 209.30,194.40 204.00,198.00 198.70,200.70 196.00,198.00 196.90,191.80 198.70,186.40 205.80,182.90 215.60,176.70 221.80,174.00" fill="none" stroke="#ff0000" stroke-width="1" stroke-linejoin="round" shape-rendering="crispEdges"/>
<polyline points="226.20,171.30 228.00,174.90 230.70,176.70 232.40,174.00 233.30,168.70 229.80,170.40 227.10,173.10" fill="none" stroke="#ff0000" stroke-width="1" stroke-linejoin="round" shape-rendering="crispEdges"/>
<polyline points="206.70,180.20 209.30,179.30 215.60,176.70" fill="none" stroke="#ff0000" stroke-width="1" stroke-linejoin="round" shape-rendering="crispEdges"/>
<polyline points="282.20,105.60 287.80,103.30" fill="none" stroke="#ff0000" stroke-width="1" stroke-linejoin="round" shape-rendering="crispEdges"/>
<polyline points="299.00,257.00 306.00,256.50 317.00,259.50 323.00,261.00 328.00,261.50 334.00,264.50" fill="none" stroke="#ff0000" stroke-width="1" stroke-linejoin="round" shape-rendering="crispEdges"/>
<polyline points="305.00,260.00 312.00,263.00 320.00,265.50" fill="none" stroke="#ff0000" stroke-width="1" stroke-linejoin="round" shape-rendering="crispEdges"/>
<polyline points="349.90,272.20 353.60,270.40 360.90,272.20 369.40,275.90 375.60,280.20 380.50,285.70 381.70,290.60 380.50,296.70 384.10,299.10 389.00,302.80 393.90,306.50 398.80,308.90 400.00,307.70 396.30,305.20 397.00,299.10 398.80,298.50 406.10,298.90 412.20,299.70 414.70,305.20 423.20,303.40 424.50,301.00 429.40,303.40 436.70,303.40 439.10,301.60 439.10,294.20 442.80,295.50 446.50,300.30 441.60,297.90 441.60,305.20 441.60,308.90 435.50,311.30 430.60,315.00 424.50,318.70 418.30,326.00 415.90,329.70 409.80,327.20 408.60,323.60 400.00,322.30 396.30,318.70 395.10,313.80 390.20,308.90 387.80,302.80 381.70,297.90" fill="none" stroke="#ff0000" stroke-width="1" stroke-linejoin="round" shape-rendering="crispEdges"/>
<polyline points="352.30,282.00 360.90,282.60 368.20,286.90 373.10,289.30 379.20,288.70 380.50,285.70" fill="none" stroke="#ff0000" stroke-width="1" stroke-linejoin="round" shape-rendering="crispEdges"/>
<polyline points="305.50,277.50 306.50,280.00 305.50,285.00 300.50,289.50 298.50,295.00 297.50,300.00 299.50,309.00 301.00,313.00 305.00,313.00 310.00,315.00 297.00,309.00 294.50,302.00 296.00,292.00 300.50,282.00 305.50,277.50" fill="none" stroke="#ff0000" stroke-width="1" stroke-linejoin="round" shape-rendering="crispEdges"/>
<polyline points="300.00,309.30 302.70,309.60 306.20,312.00 306.70,313.30 307.60,314.40 312.90,314.40 314.70,315.30" fill="none" stroke="#ff0000" stroke-width="1" stroke-linejoin="round" shape-rendering="crispEdges"/>
<polyline points="751.60,37.30 749.80,42.20 752.20,45.90 753.40,47.10 753.40,58.10 758.30,58.10 760.20,56.30 755.90,53.20 755.30,47.10 752.50,42.00" fill="none" stroke="#ff0000" stroke-width="1" stroke-linejoin="round" shape-rendering="crispEdges"/>
<polyline points="749.80,41.00 751.00,44.70" fill="none" stroke="#ff0000" stroke-width="1" stroke-linejoin="round" shape-rendering="crispEdges"/>
<polyline points="757.70,65.50 763.80,67.30 762.00,70.30 757.70,65.50" fill="none" stroke="#ff0000" stroke-width="1" stroke-linejoin="round" shape-rendering="crispEdges"/>
<polyline points="828.00,74.00 830.50,78.90 829.20,83.80 831.70,87.50 825.60,90.00 820.70,93.60 819.50,97.20 823.10,103.30" fill="none" stroke="#ff0000" stroke-width="1" stroke-linejoin="round" shape-rendering="crispEdges"/>
<polyline points="834.10,76.50 832.90,81.30 834.10,86.20 830.50,91.10 824.40,94.80 821.90,99.70" fill="none" stroke="#ff0000" stroke-width="1" stroke-linejoin="round" shape-rendering="crispEdges"/>
<polyline points="757.70,114.40 758.30,120.50 759.60,124.10 766.90,123.50 768.70,121.10 765.70,119.20 763.80,114.40 762.00,113.10" fill="none" stroke="#ff0000" stroke-width="1" stroke-linejoin="round" shape-rendering="crispEdges"/>
<polyline points="751.60,113.60 754.70,113.10 754.50,115.60 752.00,115.60 751.60,113.60" fill="none" stroke="#ff0000" stroke-width="1" stroke-linejoin="round" shape-rendering="crispEdges"/>
<polyline points="686.00,107.50 687.50,116.00" fill="none" stroke="#ff0000" stroke-width="1" stroke-linejoin="round" shape-rendering="crispEdges"/>
<polyline points="585.80,30.00 585.80,32.00" fill="none" stroke="#ff0000" stroke-width="1" stroke-linejoin="round" shape-rendering="crispEdges"/>
<polyline points="520.00,768.30 533.30,768.30 544.40,777.20 546.70,783.90 555.60,790.60 562.20,799.40 568.90,808.30 570.00,810.00 570.00,821.70 576.70,833.30 585.00,841.70 588.30,855.00 586.70,866.70 590.00,876.70 596.70,886.70" fill="none" stroke="#ff0000" stroke-width="1" stroke-linejoin="round" shape-rendering="crispEdges"/>
<polyline points="571.70,806.70 571.70,821.70 583.30,841.70 586.70,853.30 583.30,870.00 586.70,878.30 590.00,886.00" fill="none" stroke="#ff0000" stroke-width="1" stroke-linejoin="round" shape-rendering="crispEdges"/>
<polyline points="520.00,777.20 531.10,781.70 534.40,783.90" fill="none" stroke="#ff0000" stroke-width="1" stroke-linejoin="round" shape-rendering="crispEdges"/>
<polyline points="524.40,775.00 535.60,777.20 546.70,788.30 553.30,795.00 564.40,799.40" fill="none" stroke="#ff0000" stroke-width="1" stroke-linejoin="round" shape-rendering="crispEdges"/>
<polyline points="600.00,788.30 611.10,779.40 617.80,770.60 622.20,761.70" fill="none" stroke="#ff0000" stroke-width="1" stroke-linejoin="round" shape-rendering="crispEdges"/>
<polyline points="606.70,739.40 613.30,748.30 622.20,757.20 628.90,759.40 626.70,755.00" fill="none" stroke="#ff0000" stroke-width="1" stroke-linejoin="round" shape-rendering="crispEdges"/>
<polyline points="570.00,808.30 576.70,805.00 585.00,804.20" fill="none" stroke="#ff0000" stroke-width="1" stroke-linejoin="round" shape-rendering="crispEdges"/>
<polyline points="515.60,765.00 518.00,770.00 521.10,768.00" fill="none" stroke="#ff0000" stroke-width="1" stroke-linejoin="round" shape-rendering="crispEdges"/>
<polyline points="491.70,829.20 500.00,830.00 508.30,831.70 511.70,838.30 515.00,840.80 520.00,836.70 528.30,835.00" fill="none" stroke="#ff0000" stroke-width="1" stroke-linejoin="round" shape-rendering="crispEdges"/>
<polyline points="500.00,873.30 511.70,866.70 520.00,856.70 526.70,846.70 533.30,840.80 540.00,840.80 543.30,846.70 546.70,853.30 553.30,848.30 563.30,848.30 570.00,855.00 576.70,866.70 585.00,878.30 593.30,886.70" fill="none" stroke="#ff0000" stroke-width="1" stroke-linejoin="round" shape-rendering="crispEdges"/>
<polyline points="500.00,877.50 513.30,870.00 523.30,858.30 531.70,844.20 538.30,843.30 541.70,850.00 548.30,855.00 560.00,850.00 568.30,853.30 575.00,863.30 583.30,876.70 590.00,886.70" fill="none" stroke="#ff0000" stroke-width="1" stroke-linejoin="round" shape-rendering="crispEdges"/>
<polyline points="478.30,870.00 481.70,873.30 478.30,880.00" fill="none" stroke="#ff0000" stroke-width="1" stroke-linejoin="round" shape-rendering="crispEdges"/>
<polyline points="486.70,863.30 490.00,861.70 495.00,866.70 491.70,873.30" fill="none" stroke="#ff0000" stroke-width="1" stroke-linejoin="round" shape-rendering="crispEdges"/>
<polyline points="478.30,885.00 491.70,881.70" fill="none" stroke="#ff0000" stroke-width="1" stroke-linejoin="round" shape-rendering="crispEdges"/>
<polyline points="648.90,779.40 651.10,786.10 680.00,786.10" fill="none" stroke="#ff0000" stroke-width="1" stroke-linejoin="round" shape-rendering="crispEdges"/>
<polyline points="761.10,691.30 773.60,685.10" fill="none" stroke="#ff0000" stroke-width="1" stroke-linejoin="round" shape-rendering="crispEdges"/>
<polyline points="746.90,665.60 754.00,667.30" fill="none" stroke="#ff0000" stroke-width="1" stroke-linejoin="round" shape-rendering="crispEdges"/>
<polyline points="547.00,75.50 553.00,74.50 558.00,73.00 563.00,70.50 568.00,70.00 572.40,69.50" fill="none" stroke="#ff0000" stroke-width="1" stroke-linejoin="round" shape-rendering="crispEdges"/>
<polyline points="553.00,76.00 560.00,76.50 566.00,77.00 572.00,76.00" fill="none" stroke="#ff0000" stroke-width="1" stroke-linejoin="round" shape-rendering="crispEdges"/>
<polyline points="558.00,73.00 562.00,75.00 566.00,72.00 570.00,74.00" fill="none" stroke="#ff0000" stroke-width="1" stroke-linejoin="round" shape-rendering="crispEdges"/>
<polyline points="361.50,452.50 364.50,453.50 365.00,456.50 362.00,457.50 361.50,452.50" fill="none" stroke="#ff0000" stroke-width="1" stroke-linejoin="round" shape-rendering="crispEdges"/>
<polyline points="118.00,168.50 120.50,168.50 121.00,173.50 121.50,175.00 120.50,175.50 117.50,175.50 116.50,174.00 115.50,172.00 116.00,169.50 118.00,168.50" fill="none" stroke="#ff0000" stroke-width="1" stroke-linejoin="round" shape-rendering="crispEdges"/>
<polyline points="0.00,774.00 4.00,777.30 4.00,782.70 0.00,784.70" fill="none" stroke="#ff0000" stroke-width="1" stroke-linejoin="round" shape-rendering="crispEdges"/>
<polyline points="92.00,771.30 96.00,766.70" fill="none" stroke="#ff0000" stroke-width="1" stroke-linejoin="round" shape-rendering="crispEdges"/>
<polyline points="886.30,810.00 886.30,823.00 887.60,825.00 887.60,843.00 888.50,845.00 888.50,886.00 884.00,887.00" fill="none" stroke="#ff0000" stroke-width="1" stroke-linejoin="round" shape-rendering="crispEdges"/>
<polyline points="752.20,404.70 756.70,403.30 757.60,406.40 752.70,406.00 752.20,404.70" fill="none" stroke="#ff0000" stroke-width="1" stroke-linejoin="round" shape-rendering="crispEdges"/>
<polyline points="767.30,403.80 773.60,397.60 772.70,401.10 769.10,404.70" fill="none" stroke="#ff0000" stroke-width="1" stroke-linejoin="round" shape-rendering="crispEdges"/>
<polyline points="778.00,400.20 785.10,394.90 779.80,398.40" fill="none" stroke="#ff0000" stroke-width="1" stroke-linejoin="round" shape-rendering="crispEdges"/>
<polyline points="781.60,382.40 783.30,380.70 785.10,378.00 783.30,375.30 782.40,378.00 784.20,379.80 785.10,382.40 790.40,382.40 793.10,386.00 791.30,386.90 785.10,383.30 782.40,383.30" fill="none" stroke="#ff0000" stroke-width="1" stroke-linejoin="round" shape-rendering="crispEdges"/>
<polyline points="835.00,360.00 840.00,355.00 845.00,356.00 842.50,365.00" fill="none" stroke="#ff0000" stroke-width="1" stroke-linejoin="round" shape-rendering="crispEdges"/>
<polyline points="815.70,455.00 816.30,458.30 817.00,464.30 813.00,468.30 811.70,470.30 813.00,473.70 812.30,477.70 813.70,476.30 813.70,473.00 817.00,469.70 823.70,469.30 835.00,470.30 845.00,472.30" fill="none" stroke="#ff0000" stroke-width="1" stroke-linejoin="round" shape-rendering="crispEdges"/>
<polyline points="835.00,473.00 839.70,473.70 842.30,477.70 845.70,481.00" fill="none" stroke="#ff0000" stroke-width="1" stroke-linejoin="round" shape-rendering="crispEdges"/>
<polyline points="485.00,445.00 487.50,452.50 483.75,453.75 490.00,460.00 500.00,457.50 520.00,447.50 525.00,443.75" fill="none" stroke="#ff0000" stroke-width="1" stroke-linejoin="round" shape-rendering="crispEdges"/>
<polyline points="529.50,0.00 529.50,12.50 537.50,12.50 537.50,89.50 544.50,89.50 544.50,125.00 545.50,125.00 545.50,166.50 570.50,166.50 570.50,179.00 571.50,179.00 571.50,205.50 591.50,205.50 591.50,243.50 846.00,243.50" fill="none" stroke="#ff0000" stroke-width="1" shape-rendering="crispEdges"/>
<polyline points="791.50,764.50 791.50,783.50 846.00,783.50" fill="none" stroke="#ff0000" stroke-width="1" shape-rendering="crispEdges"/>
<polyline points="763.50,747.00 763.50,764.50 791.50,764.50" fill="none" stroke="#ff0000" stroke-width="1" shape-rendering="crispEdges"/>
<polyline points="648.90,786.50 705.80,786.50" fill="none" stroke="#ff0000" stroke-width="1" shape-rendering="crispEdges"/>
<polyline points="705.80,786.50 718.20,765.80 741.30,752.10 761.80,746.80 763.50,747.00" fill="none" stroke="#ff0000" stroke-width="1" stroke-linejoin="round" shape-rendering="crispEdges"/>
<circle cx="132.5" cy="201.9" r="11.4" fill="none" stroke="#ff0000" stroke-width="1" shape-rendering="crispEdges"/>
<circle cx="189.25" cy="346" r="14.5" fill="none" stroke="#ff0000" stroke-width="1" shape-rendering="crispEdges"/>
<circle cx="801.1" cy="651.7" r="11.4" fill="none" stroke="#ff0000" stroke-width="1" shape-rendering="crispEdges"/>
<polyline points="500.40,0.00 493.30,2.00 475.60,9.80 457.80,16.90 440.00,24.90 416.70,40.00 391.70,54.00 366.70,69.00 333.30,90.50 303.30,112.20 286.70,125.60 267.80,141.10 242.20,160.00 226.20,167.80 211.10,174.00 197.80,182.00 191.60,188.20 188.90,196.20 190.70,203.30 195.10,212.20 204.90,217.60 213.80,221.10 224.40,229.10 228.30,231.70 245.00,245.00 261.70,251.70 280.00,254.50 287.00,254.50 300.00,260.00 310.00,265.00 320.00,269.50 328.00,267.00 336.00,266.50 344.00,271.00 350.00,275.00 351.50,279.00 349.00,283.00 342.00,289.00 340.00,291.00 341.00,297.00 340.00,303.00 334.00,310.00 326.70,313.30 317.80,317.80 306.70,319.60 301.30,318.70 306.70,323.00 313.30,327.60 317.80,334.70 319.00,340.00 325.60,346.70 333.30,353.30 341.10,362.20 344.40,368.90 346.70,376.70 338.90,385.60 338.30,396.70 339.40,407.80 344.40,418.90 350.00,424.40 358.30,430.00 366.70,435.00 375.00,437.50 383.30,439.50 400.00,443.70 416.70,447.50 433.30,450.80 450.00,455.80 466.70,461.70 476.70,466.70 483.30,465.80 500.00,460.00 520.00,450.00 542.50,437.50 567.50,438.75 587.50,435.50 612.50,437.50 620.00,440.00 628.90,445.60 640.00,453.30 645.60,458.90 648.90,464.40 652.20,472.20 661.10,472.20 661.10,462.20 663.90,453.30 665.60,448.90 674.40,445.60 685.60,454.40 687.80,463.30 691.10,475.60 692.80,490.00 697.80,483.30 706.70,476.70 708.90,453.30 713.30,446.70 720.00,440.60 744.20,418.00 749.60,409.10 756.70,407.30 767.30,406.40 771.80,405.60 776.20,396.70 783.30,391.30 794.00,387.80 802.90,392.20 808.20,396.70 817.50,393.75 827.50,372.50 842.50,357.50 845.00,355.00" fill="none" stroke="#ff0000" stroke-width="4.0" stroke-linejoin="round" stroke-linecap="round" shape-rendering="crispEdges"/>
<polyline points="665.60,448.90 656.70,448.30 651.10,444.40 640.00,437.80 635.60,432.20 633.90,427.80 641.10,423.30 650.00,418.90 656.10,417.80 656.10,425.60 664.40,432.20 666.70,434.40 666.70,443.30 665.60,448.90" fill="none" stroke="#ff0000" stroke-width="3.6" stroke-linejoin="round" stroke-linecap="round" shape-rendering="crispEdges"/>
<polyline points="587.60,0.00 589.30,5.30 585.80,16.00 578.70,26.70 576.90,32.00 577.80,49.80 580.40,51.60 576.90,60.40 572.40,71.10 572.40,76.40 578.70,88.90 586.70,103.10 594.70,104.00 597.80,103.30 613.30,97.80 624.40,99.30 635.60,102.70 651.10,102.70 662.20,98.90 680.00,96.70 688.90,107.80 702.20,106.70 717.80,110.00 735.60,100.70 748.90,105.60 760.00,111.80 763.30,108.30 768.90,101.10 773.30,95.00 780.00,80.00 785.00,63.30 791.70,59.20 803.30,60.00 808.50,70.30 815.80,71.60 825.60,69.10 836.60,70.30 836.60,74.00 837.80,70.30 835.40,61.80 825.60,47.10 810.00,39.00 800.00,34.00 786.00,29.00 772.00,29.00 763.00,32.00 754.00,35.50 754.00,20.00 753.00,0.00" fill="none" stroke="#ff0000" stroke-width="4.0" stroke-linejoin="round" stroke-linecap="round" shape-rendering="crispEdges"/>
<polyline points="572.40,70.00 572.40,70.00" fill="none" stroke="#ff0000" stroke-width="3.6" stroke-linejoin="round" stroke-linecap="round" shape-rendering="crispEdges"/>
<polyline points="752.00,0.00 760.00,5.00 770.00,13.00 780.00,19.50 790.00,17.00 796.00,14.00 802.00,6.00 805.00,0.00" fill="none" stroke="#ff0000" stroke-width="4.0" stroke-linejoin="round" stroke-linecap="round" shape-rendering="crispEdges"/>
<polyline points="788.00,0.00 805.00,1.00" fill="none" stroke="#ff0000" stroke-width="3.6" stroke-linejoin="round" stroke-linecap="round" shape-rendering="crispEdges"/>
<polyline points="0.00,49.00 6.00,53.00 11.00,58.00 14.00,64.00 15.50,70.00 16.50,77.00 23.00,80.00 32.00,79.50 42.00,80.00 50.00,83.00 56.00,89.00 56.50,98.00 52.00,107.00 46.00,116.00 38.00,113.00 30.00,108.00 20.00,107.00 12.00,112.00 5.00,119.00 0.00,126.00" fill="none" stroke="#ff0000" stroke-width="3.2" stroke-linejoin="round" stroke-linecap="round" shape-rendering="crispEdges"/>
<polyline points="704.20,657.60 714.90,646.90 732.70,644.20 738.00,649.60 742.40,662.90 725.60,666.40 711.30,662.00 704.20,657.60" fill="none" stroke="#ff0000" stroke-width="3.4" stroke-linejoin="round" stroke-linecap="round" shape-rendering="crispEdges"/>
<polyline points="640.00,776.40 675.60,771.60 682.70,763.10 693.30,750.70 696.90,740.00 713.30,733.30 723.30,716.00 731.30,704.00 737.30,694.70 741.60,688.70 750.40,674.40 757.60,670.00 766.40,673.60 770.00,683.30 773.60,687.80 789.60,686.00 807.30,682.40 825.10,683.30 844.70,680.70" fill="none" stroke="#ff0000" stroke-width="3.6" stroke-linejoin="round" stroke-linecap="round" shape-rendering="crispEdges"/>
<polyline points="496.70,886.70 497.50,870.00 495.00,856.70 494.20,841.70 494.20,826.70 496.70,813.30 501.70,800.00 504.40,795.00 513.30,781.70 522.20,773.90 524.40,766.10 521.10,758.30 524.40,750.60 537.80,737.20 555.60,730.60 573.30,728.30 586.70,731.70 602.20,738.30 607.80,746.10 611.10,757.20 622.20,761.70 633.30,765.00 635.60,775.00 646.70,778.30 662.20,773.90 675.60,771.60" fill="none" stroke="#ff0000" stroke-width="3.8" stroke-linejoin="round" stroke-linecap="round" shape-rendering="crispEdges"/>
<polyline points="0.00,690.70 5.30,690.70 14.00,689.30 18.70,694.70 23.30,700.70 34.70,705.30 50.70,708.70 62.70,710.00 84.00,710.70 93.30,714.00 108.00,720.70 105.30,730.70 100.00,741.30 93.30,752.00 85.30,752.00 77.30,748.70 60.00,747.30 46.70,748.00 33.30,752.00 32.00,762.70 22.70,769.30 17.30,778.70 20.00,790.70 9.30,798.70 0.00,796.00" fill="none" stroke="#ff0000" stroke-width="3.2" stroke-linejoin="round" stroke-linecap="round" shape-rendering="crispEdges"/>
<polyline points="845.00,452.30 838.30,451.00 831.70,448.30 825.00,444.30 821.00,445.70 817.70,449.70 818.30,455.00 821.70,459.70 825.00,467.00 831.70,473.00 838.30,478.30 844.30,485.70 845.00,488.30" fill="none" stroke="#ff0000" stroke-width="3.8" stroke-linejoin="round" stroke-linecap="round" shape-rendering="crispEdges"/>
<rect x="873.5" y="87.5" width="20" height="714" fill="#000" stroke="#800080" stroke-width="1" shape-rendering="crispEdges"/>
<rect x="875" y="89" width="17" height="11" fill="#780080"/>
<rect x="875" y="100" width="17" height="12" fill="#801080"/>
<rect x="875" y="112" width="17" height="12" fill="#a04880"/>
<rect x="875" y="124" width="17" height="10" fill="#f0c088"/>
<rect x="875" y="134" width="17" height="143" fill="#ffc880"/>
<rect x="875" y="277" width="17" height="12" fill="#ffa860"/>
<rect x="875" y="289" width="17" height="12" fill="#ff8c38"/>
<rect x="875" y="301" width="17" height="77" fill="#ff7820"/>
<rect x="875" y="378" width="17" height="12" fill="#ff7c20"/>
<rect x="875" y="390" width="17" height="11" fill="#ff9010"/>
<rect x="875" y="401" width="17" height="9" fill="#ffc010"/>
<rect x="875" y="410" width="17" height="24" fill="#ffff00"/>
<rect x="875" y="434" width="17" height="12" fill="#f8f000"/>
<rect x="875" y="446" width="17" height="9" fill="#ccf000"/>
<rect x="875" y="455" width="17" height="12" fill="#22ee30"/>
<rect x="875" y="467" width="17" height="32" fill="#00f020"/>
<rect x="875" y="499" width="17" height="12" fill="#10e828"/>
<rect x="875" y="511" width="17" height="15" fill="#22b444"/>
<rect x="875" y="526" width="17" height="8" fill="#20b848"/>
<rect x="875" y="534" width="17" height="10" fill="#40e0b0"/>
<rect x="875" y="544" width="17" height="12" fill="#60f8f0"/>
<rect x="875" y="556" width="17" height="12" fill="#78c0d8"/>
<rect x="875" y="568" width="17" height="10" fill="#8898c8"/>
<rect x="875" y="578" width="17" height="10" fill="#9888c0"/>
<rect x="875" y="588" width="17" height="12" fill="#c080c0"/>
<rect x="875" y="600" width="17" height="12" fill="#e070c0"/>
<rect x="875" y="612" width="17" height="10" fill="#e86090"/>
<rect x="875" y="622" width="17" height="10" fill="#e05070"/>
<rect x="875" y="632" width="17" height="12" fill="#d04058"/>
<rect x="875" y="644" width="17" height="12" fill="#c02848"/>
<rect x="875" y="656" width="17" height="11" fill="#880020"/>
<rect x="875" y="667" width="17" height="10" fill="#700018"/>
<rect x="875" y="677" width="17" height="12" fill="#600010"/>
<rect x="875" y="689" width="17" height="12" fill="#500808"/>
<rect x="875" y="701" width="17" height="10" fill="#502020"/>
<rect x="875" y="711" width="17" height="10" fill="#505050"/>
<rect x="875" y="721" width="17" height="12" fill="#484848"/>
<rect x="875" y="733" width="17" height="12" fill="#707070"/>
<rect x="875" y="745" width="17" height="44" fill="#787878"/>
<path d="M888.5 15V6.5H895M890 8.5L895 13.5M895 10.5V14.5H891" fill="none" stroke="#ffff00" stroke-width="1.2"/>
</svg>
<div class="t" style="left:715px;top:6.3px;font-size:12.5px;letter-spacing:-0.5px;color:#ffff00">NEXLAB-College of DuPage</div>
<div class="t" style="left:867px;top:54px;font-size:13.33px;color:#ffff00">DKD</div>
<div class="t" style="left:824px;top:64px;font-size:13.33px;letter-spacing:-0.6px;color:#ffff00">[PHAS]</div>
<div class="t" style="left:171px;top:889px;font-size:12.5px;letter-spacing:1.5px;color:#f4c878">SPECIFIC DIFFERENTIAL PHASE (KDP) 0.5 DEG - KAEC 9 JAN 26 22:13</div>
<div class="lab" style="top:107.00px">9.8</div>
<div class="lab" style="top:151.40px">9.0</div>
<div class="lab" style="top:195.80px">8.2</div>
<div class="lab" style="top:240.20px">7.4</div>
<div class="lab" style="top:284.60px">6.6</div>
<div class="lab" style="top:329.00px">5.8</div>
<div class="lab" style="top:373.40px">5.0</div>
<div class="lab" style="top:417.80px">4.2</div>
<div class="lab" style="top:462.20px">3.4</div>
<div class="lab" style="top:506.60px">2.6</div>
<div class="lab" style="top:551.00px">1.8</div>
<div class="lab" style="top:595.40px">1.0</div>
<div class="lab" style="top:639.80px">0.2</div>
<div class="lab" style="top:684.20px">-0.5</div>
<div class="lab" style="top:728.60px">-1.3</div>
<div class="lab" style="top:773.00px">TH</div>

<div class="nmi" style="left:428px;top:73px">100 NMI</div>
<div class="nmi" style="left:431px;top:258px">50 NMI</div>
</div></body></html>
